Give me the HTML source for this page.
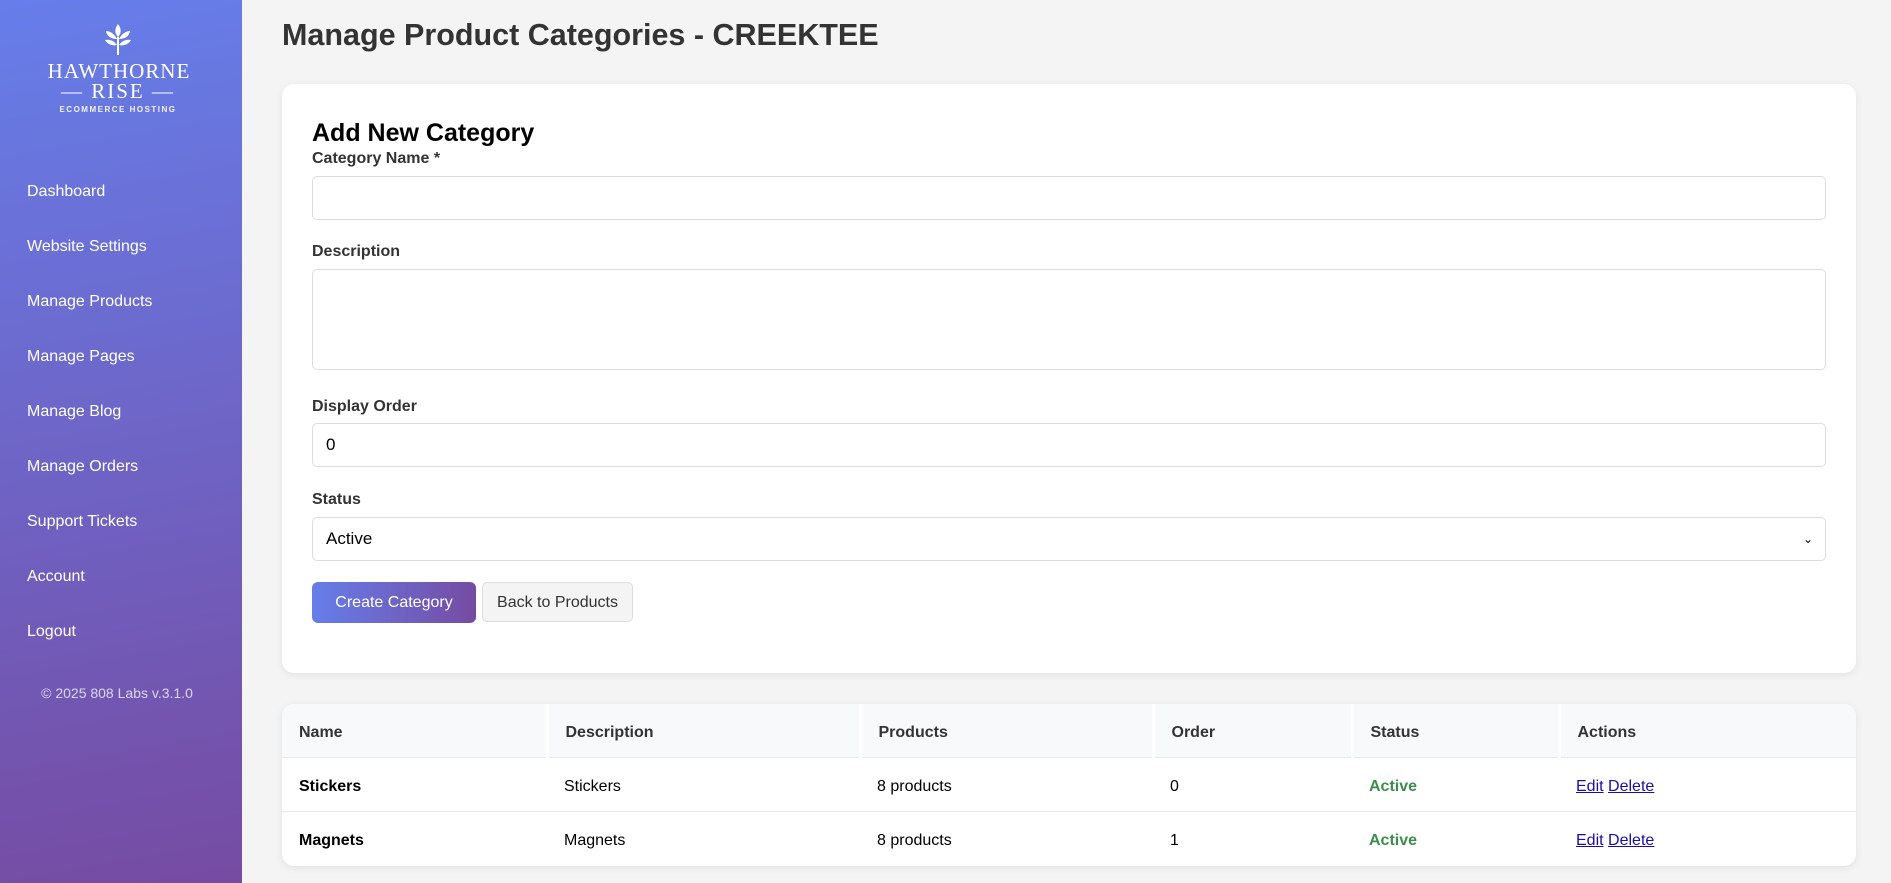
<!DOCTYPE html>
<html><head><meta charset="utf-8"><style>
*{box-sizing:border-box;margin:0;padding:0}
body{width:1891px;height:883px;overflow:hidden;background:#f4f4f4;font-family:"Liberation Sans",sans-serif;color:#333;position:relative}
.sb{position:absolute;left:0;top:0;width:242px;height:883px;background:linear-gradient(170deg,#667eea 0%,#764ba2 100%)}
.logo{position:absolute;left:0;width:234px;text-align:center;color:#fff;font-family:"Liberation Serif",serif}
.nav a{position:absolute;left:27px;color:#fff;font-size:16px;text-decoration:none}
.foot{position:absolute;top:685px;left:0;width:234px;text-align:center;color:rgba(255,255,255,.75);font-size:14px}
h1{position:absolute;left:282px;top:18px;font-size:30.5px;color:#333;font-weight:bold}
.card{position:absolute;left:282px;width:1574px;background:#fff;border-radius:12px;box-shadow:0 2px 8px rgba(0,0,0,.08)}
label{position:absolute;left:30px;font-size:16px;font-weight:bold;color:#333}
.inp{position:absolute;left:30px;width:1514px;border:1px solid #ddd;border-radius:5px;background:#fff;font-size:17px;padding-left:13px;display:flex;align-items:center;color:#000}
table{position:absolute;left:0;top:0;width:100%;border-collapse:collapse;font-size:16px}
th{background:#f8f9fa;text-align:left;font-weight:bold;height:53px;padding-left:17px;padding-top:6px;color:#333;border-right:3px solid #fff}
td{height:54px;padding-left:17px;padding-top:6px;border-top:1px solid #e8e8e8;color:#000}
.act{color:#3c8d4a;font-weight:bold}
td a{color:#1a0dab;text-decoration:underline}
</style></head><body>
<div class="sb">
 <svg style="position:absolute;left:103px;top:23px" width="30" height="32" viewBox="0 0 30 32" fill="#fff">
  <path d="M15 1 C11 6 12 11 15 14 C18 11 19 6 15 1Z"/>
  <path d="M3 8 C4 14 9 16 14 16 C12 12 8 8 3 8Z"/>
  <path d="M27 8 C26 14 21 16 16 16 C18 12 22 8 27 8Z"/>
  <path d="M2 17 C5 22 10 23 14 22 C11 18 7 16 2 17Z"/>
  <path d="M28 17 C25 22 20 23 16 22 C19 18 23 16 28 17Z"/>
  <rect x="14" y="14" width="2" height="18"/>
 </svg>
 <div class="logo" style="top:59px;font-size:21px;letter-spacing:1px;left:2px">HAWTHORNE</div>
 <div class="logo" style="top:79px;font-size:21px;letter-spacing:2px;left:1px">— RISE —</div>
 <div class="logo" style="top:105px;font-size:8px;letter-spacing:1.5px;font-family:'Liberation Sans',sans-serif;font-weight:bold;opacity:.9;left:1px">ECOMMERCE HOSTING</div>
 <div class="nav">
  <a style="top:183px">Dashboard</a>
  <a style="top:238px">Website Settings</a>
  <a style="top:293px">Manage Products</a>
  <a style="top:348px">Manage Pages</a>
  <a style="top:403px">Manage Blog</a>
  <a style="top:458px">Manage Orders</a>
  <a style="top:513px">Support Tickets</a>
  <a style="top:568px">Account</a>
  <a style="top:623px">Logout</a>
 </div>
 <div class="foot">© 2025 808 Labs v.3.1.0</div>
</div>
<h1>Manage Product Categories - CREEKTEE</h1>
<div class="card" style="top:84px;height:589px">
 <div style="position:absolute;left:30px;top:35px;font-size:25px;font-weight:bold;color:#000">Add New Category</div>
 <label style="top:66px">Category Name *</label>
 <div class="inp" style="top:92px;height:44px"></div>
 <label style="top:159px">Description</label>
 <div class="inp" style="top:185px;height:101px"></div>
 <label style="top:314px">Display Order</label>
 <div class="inp" style="top:339px;height:44px">0</div>
 <label style="top:407px">Status</label>
 <div class="inp" style="top:433px;height:44px;justify-content:space-between;padding-right:12px">Active<span style="font-size:12px">&#8964;</span></div>
 <div style="position:absolute;left:30px;top:498px;width:164px;height:41px;border-radius:6px;background:linear-gradient(90deg,#667eea,#764ba2);color:#fff;font-size:16px;display:flex;align-items:center;justify-content:center">Create Category</div>
 <div style="position:absolute;left:200px;top:498px;width:151px;height:40px;border-radius:5px;background:#f4f4f4;border:1px solid #ddd;color:#333;font-size:16px;padding-top:2px;display:flex;align-items:center;justify-content:center">Back to Products</div>
</div>
<div class="card" style="top:704px;height:162px;overflow:hidden">
 <table>
  <tr><th style="width:265px">Name</th><th style="width:313px">Description</th><th style="width:293px">Products</th><th style="width:199px">Order</th><th style="width:207px">Status</th><th style="border-right:0">Actions</th></tr>
  <tr><td><b>Stickers</b></td><td>Stickers</td><td>8 products</td><td>0</td><td class="act">Active</td><td><a>Edit</a> <a>Delete</a></td></tr>
  <tr><td><b>Magnets</b></td><td>Magnets</td><td>8 products</td><td>1</td><td class="act">Active</td><td><a>Edit</a> <a>Delete</a></td></tr>
 </table>
</div>
</body></html>
